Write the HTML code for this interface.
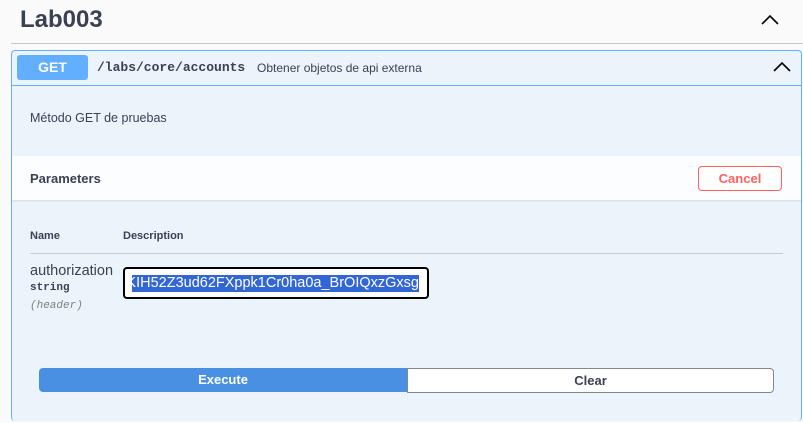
<!DOCTYPE html>
<html><head><style>
body{margin:0;width:803px;height:423px;background:#fafafa;font-family:"Liberation Sans",sans-serif;overflow:hidden;position:relative;color:#3b4151}
.abs{position:absolute}
</style></head><body>
<div class="abs" style="left:20px;top:6px;font-size:24px;font-weight:bold;color:#3b4151">Lab003</div>
<svg class="abs" style="left:761px;top:14px" width="18" height="12" viewBox="0 0 18 12"><path d="M1 10 L9 2 L17 10" fill="none" stroke="#000" stroke-width="1.6"/></svg>
<div class="abs" style="left:11px;top:43px;width:792px;height:1px;background:#c8c8c8"></div>
<div class="abs" style="left:11px;top:50px;width:789px;height:370px;border:1px solid #61affe;border-radius:4px;background:#ebf3fb;border-bottom:none"></div>
<div class="abs" style="left:12px;top:85px;width:789px;height:1px;background:#61affe"></div>
<div class="abs" style="left:17px;top:55px;width:71px;height:25px;background:#61affe;border-radius:3px;color:#fff;font-weight:bold;font-size:14px;text-align:center;line-height:25px">GET</div>
<div class="abs" style="left:97px;top:60px;font-family:'Liberation Mono',monospace;font-weight:bold;font-size:13px;color:#3b4151">/labs/core/accounts</div>
<div class="abs" style="left:257px;top:61px;font-size:12px;color:#3b4151">Obtener objetos de api externa</div>
<svg class="abs" style="left:773px;top:61px" width="18" height="12" viewBox="0 0 18 12"><path d="M1 10 L9 2 L17 10" fill="none" stroke="#000" stroke-width="1.6"/></svg>
<div class="abs" style="left:30px;top:111px;font-size:12.5px">Método GET de pruebas</div>
<div class="abs" style="left:12px;top:156px;width:789px;height:44px;background:#fcfdfe;box-shadow:0 1px 2px rgba(0,0,0,.1)"></div>
<div class="abs" style="left:30px;top:171px;font-size:13px;font-weight:bold">Parameters</div>
<div class="abs" style="left:698px;top:166px;width:82px;height:23px;border:1px solid #ff6060;border-radius:4px;background:#fff;color:#ff6060;font-weight:bold;font-size:13px;text-align:center;line-height:23px">Cancel</div>
<div class="abs" style="left:30px;top:230px;font-size:11px;font-weight:bold">Name</div>
<div class="abs" style="left:123px;top:230px;font-size:11px;font-weight:bold">Description</div>
<div class="abs" style="left:30px;top:253px;width:753px;height:1px;background:#c7cbd1"></div>
<div class="abs" style="left:30px;top:263px;font-size:14.5px">authorization</div>
<div class="abs" style="left:30px;top:282px;font-size:11px;font-family:'Liberation Mono',monospace;font-weight:bold">string</div>
<div class="abs" style="left:30px;top:300px;font-size:11px;font-family:'Liberation Mono',monospace;font-style:italic;color:#808080">(header)</div>
<div class="abs" style="left:123px;top:267px;width:302px;height:28px;border:2px solid #000;border-radius:4px;background:#fff"></div>
<div class="abs" style="left:132px;top:275px;height:17px;width:287px;background:#3266d5;color:#fff;font-size:14.5px;line-height:17px;white-space:nowrap;overflow:hidden;direction:rtl;text-align:left"><span style="direction:ltr;unicode-bidi:bidi-override">KIH52Z3ud62FXppk1Cr0ha0a_BrOIQxzGxsg</span></div>
<div class="abs" style="left:39px;top:368px;width:368px;height:24px;background:#4990e2;border-radius:4px 0 0 4px;color:#fff;font-weight:bold;font-size:13px;text-align:center;line-height:24px">Execute</div>
<div class="abs" style="left:407px;top:368px;width:365px;height:23px;border:1px solid #888;border-radius:0 4px 4px 0;background:#fff;color:#3b4151;font-weight:bold;font-size:13px;text-align:center;line-height:23px">Clear</div>
</body></html>
